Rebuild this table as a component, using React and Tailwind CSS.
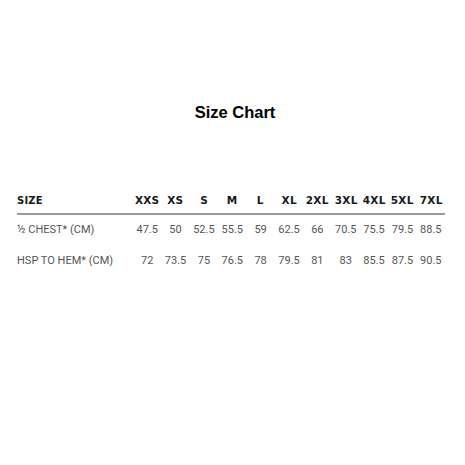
import React from "react";

const sizes = ["XXS", "XS", "S", "M", "L", "XL", "2XL", "3XL", "4XL", "5XL", "7XL"];

const rows = [
  { label: "½ CHEST* (CM)", values: ["47.5", "50", "52.5", "55.5", "59", "62.5", "66", "70.5", "75.5", "79.5", "88.5"] },
  { label: "HSP TO HEM* (CM)", values: ["72", "73.5", "75", "76.5", "78", "79.5", "81", "83", "85.5", "87.5", "90.5"] },
];

const App = () => {
  return (
    <div className="w-[465px] h-[465px] bg-white pt-[101px]">
      <h1 className="text-center text-[16.5px] leading-[22px] font-bold text-black font-['Liberation_Sans',sans-serif] pl-[5px]">
        Size Chart
      </h1>

      <div className="mt-[70px] ml-[17px] w-[428px]">
        {/* header */}
        <div className="grid grid-cols-[116px_repeat(11,_1fr)] items-center h-[14px] border-b-2 border-[#9a9a9a] pb-[6px] box-content font-['DejaVu_Sans',sans-serif] font-bold text-[10px] text-[#1a1a1a] tracking-[0.2px]">
          <div>SIZE</div>
          {sizes.map((s) => (
            <div key={s} className="text-center scale-x-105">
              {s}
            </div>
          ))}
        </div>

        {/* rows */}
        {rows.map((row) => (
          <div
            key={row.label}
            className="grid grid-cols-[116px_repeat(11,_1fr)] items-center h-[31px] font-['Roboto',sans-serif] text-[11px] text-[#555]"
          >
            <div>{row.label}</div>
            {row.values.map((v, i) => (
              <div key={i} className="text-center">
                {v}
              </div>
            ))}
          </div>
        ))}
      </div>
    </div>
  );
};

export default App;
